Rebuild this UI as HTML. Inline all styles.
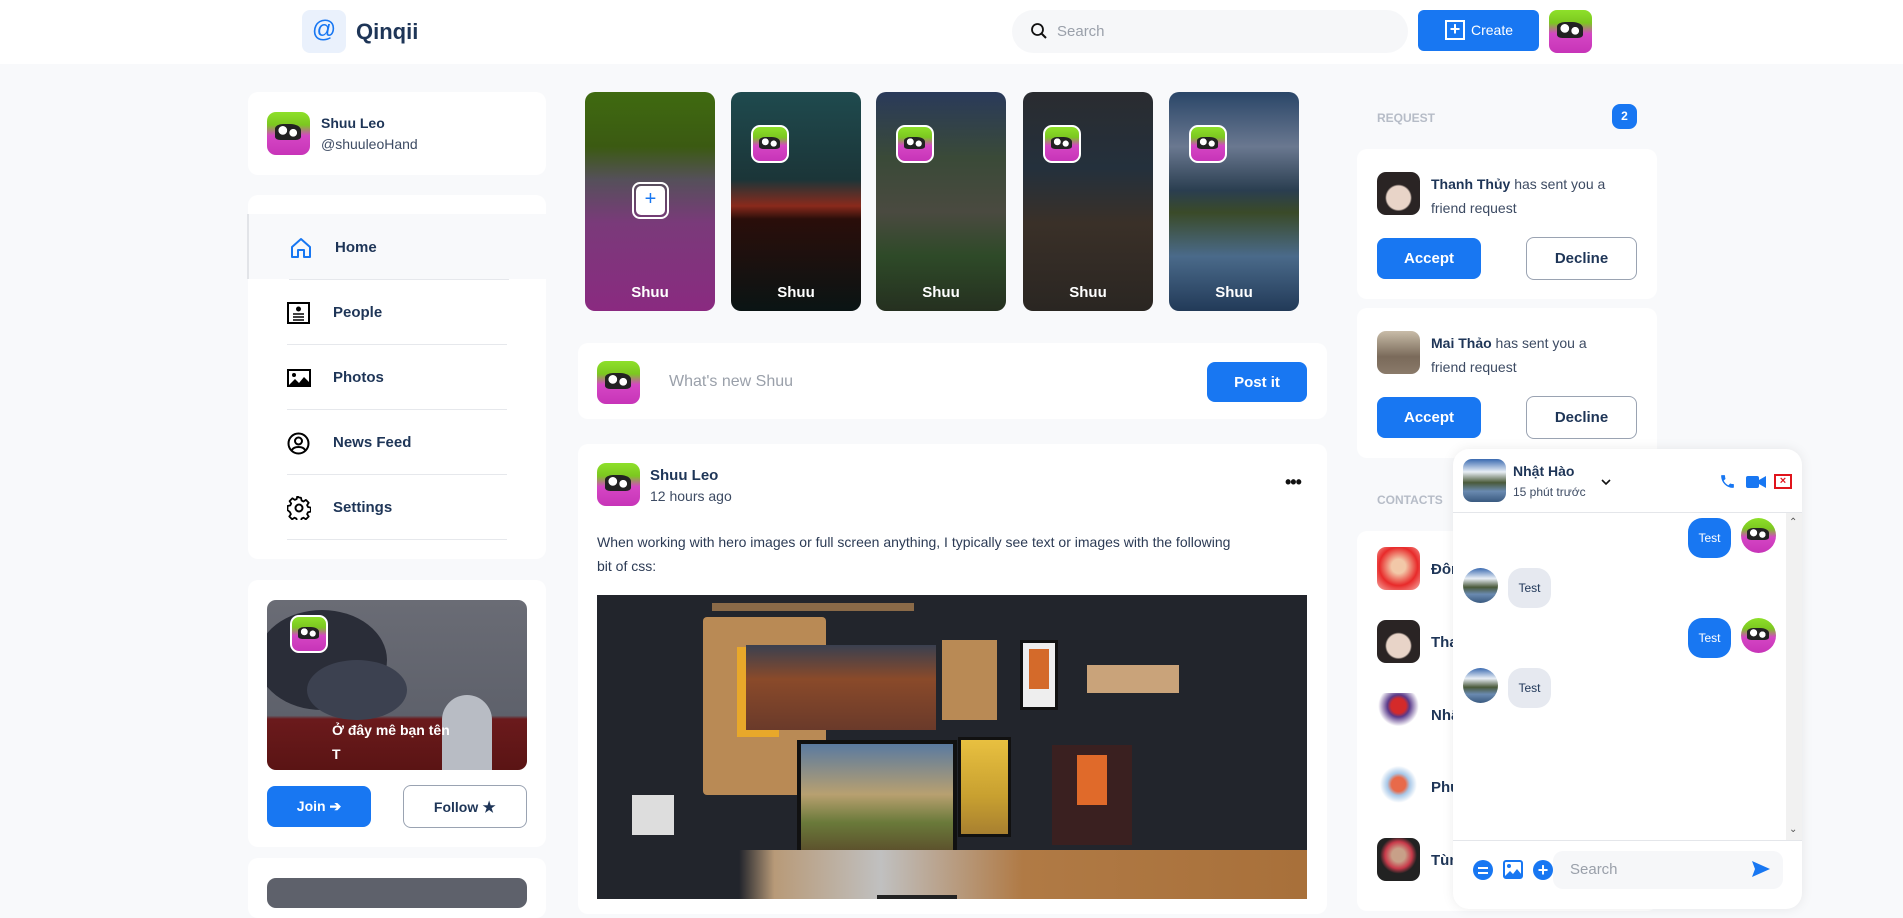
<!DOCTYPE html>
<html><head><meta charset="utf-8"><style>
*{box-sizing:border-box;margin:0;padding:0}
body{width:1903px;height:899px;overflow:hidden;background:#f8f9fb;font-family:"Liberation Sans","Noto Sans CJK SC",sans-serif;color:#1e3557;position:relative}
.a{position:absolute}
.card{position:absolute;background:#fff;border-radius:10px}
.cow{background:linear-gradient(180deg,#8ee02a 0%,#7cc820 30%,#d546c4 55%,#c734b8 100%);overflow:hidden}
.cow:after{content:"";position:absolute;left:18%;top:28%;width:62%;height:36%;background:radial-gradient(circle at 30% 40%,#fff 0 20%,transparent 22%),radial-gradient(circle at 70% 55%,#fff 0 18%,transparent 20%),#222;border-radius:30% 40% 20% 20%}
.b{font-weight:bold}
.nav{position:absolute;left:333px;font-weight:bold;font-size:15px;color:#1e3557}
.sep{position:absolute;left:287px;width:220px;height:1px;background:#e6e8ec}
.btnb{position:absolute;background:#1877f2;color:#fff;border-radius:8px;font-weight:bold;font-size:15px;display:flex;align-items:center;justify-content:center}
.btnw{position:absolute;background:#fff;border:1px solid #9aa3b2;color:#1e3557;border-radius:8px;font-weight:bold;font-size:15px;display:flex;align-items:center;justify-content:center}
.story{position:absolute;top:92px;width:130px;height:219px;border-radius:10px;overflow:hidden}
.story .n{position:absolute;bottom:10px;width:100%;text-align:center;color:#fff;font-weight:bold;font-size:15px}
.story .av{position:absolute;left:20px;top:33px;width:38px;height:38px;border-radius:9px;border:2px solid #fff}
.ct{position:absolute;left:1377px;width:43px;height:43px;border-radius:9px}
.cn{position:absolute;left:1431px;font-weight:bold;font-size:15px}
.bub{position:absolute;height:40px;border-radius:14px;font-size:12px;display:flex;align-items:center;justify-content:center;width:43px}
</style></head><body>
<!-- header -->
<div class="a" style="left:0;top:0;width:1903px;height:64px;background:#fff"></div>
<div class="a" style="left:302px;top:10px;width:44px;height:43px;background:#eaf1fc;border-radius:8px;color:#1877f2;font-size:24px;text-align:center;line-height:40px">@</div>
<div class="a b" style="left:356px;top:19px;font-size:22px;color:#1e3557">Qinqii</div>
<div class="a" style="left:1012px;top:10px;width:396px;height:43px;background:#f6f7f9;border-radius:22px"></div>
<svg class="a" style="left:1030px;top:22px" width="18" height="18" viewBox="0 0 18 18"><circle cx="7.5" cy="7.5" r="5.5" fill="none" stroke="#111" stroke-width="1.8"/><path d="M11.5 11.5L16 16" stroke="#111" stroke-width="2"/></svg>
<div class="a" style="left:1057px;top:23px;font-size:15px;color:#9aa0aa">Search</div>
<div class="a" style="left:1418px;top:10px;width:121px;height:41px;background:#1877f2;border-radius:6px"></div>
<div class="a" style="left:1445px;top:20px;width:20px;height:20px;border:2px solid #fff;color:#fff;font-size:18px;line-height:15px;text-align:center;font-weight:bold">+</div>
<div class="a" style="left:1471px;top:22px;color:#fff;font-size:14px">Create</div>
<div class="a cow" style="left:1549px;top:10px;width:43px;height:43px;border-radius:8px"></div>

<!-- left -->
<div class="card" style="left:248px;top:92px;width:298px;height:83px"></div>
<div class="a cow" style="left:267px;top:112px;width:43px;height:43px;border-radius:9px"></div>
<div class="a b" style="left:321px;top:115px;font-size:14px">Shuu Leo</div>
<div class="a" style="left:321px;top:136px;font-size:14px;color:#3d4b63">@shuuleoHand</div>

<div class="card" style="left:248px;top:195px;width:298px;height:364px"></div>
<div class="a" style="left:247px;top:214px;width:299px;height:65px;background:#f8f9fb;border-left:2px solid #e2e4e8"></div>
<svg class="a" style="left:290px;top:237px" width="22" height="22" viewBox="0 0 22 22"><path d="M2 10L11 2l9 8v10h-6v-7H8v7H2z" fill="none" stroke="#1877f2" stroke-width="2" stroke-linejoin="round"/></svg>
<div class="nav" style="top:239px;left:335px">Home</div>
<div class="sep" style="top:279px;left:289px"></div>
<svg class="a" style="left:287px;top:302px" width="23" height="22" viewBox="0 0 23 22"><rect x="1" y="1" width="21" height="20" fill="none" stroke="#000" stroke-width="2"/><circle cx="11.5" cy="7" r="2.5"/><path d="M6 12h11M6 15h11M6 18h11" stroke="#000" stroke-width="1.6"/></svg>
<div class="nav" style="top:304px">People</div>
<div class="sep" style="top:344px"></div>
<svg class="a" style="left:287px;top:369px" width="24" height="18" viewBox="0 0 24 18"><rect x="1" y="1" width="22" height="16" fill="none" stroke="#000" stroke-width="2"/><circle cx="7" cy="6" r="2"/><path d="M1 17L8 10l4 4 5-6 6 6v3z"/></svg>
<div class="nav" style="top:369px">Photos</div>
<div class="sep" style="top:409px"></div>
<svg class="a" style="left:287px;top:432px" width="23" height="23" viewBox="0 0 23 23"><circle cx="11.5" cy="11.5" r="10" fill="none" stroke="#000" stroke-width="2"/><circle cx="11.5" cy="9" r="3.5" fill="none" stroke="#000" stroke-width="2"/><path d="M5 18c2-4 11-4 13 0" fill="none" stroke="#000" stroke-width="2"/></svg>
<div class="nav" style="top:434px">News Feed</div>
<div class="sep" style="top:474px"></div>
<svg class="a" style="left:287px;top:496px" width="24" height="24" viewBox="0 0 24 24"><path d="M12 1.5l2 .3.6 2.8 1.9.9 2.4-1.6 2.8 2.8-1.6 2.4.9 1.9 2.8.6v4l-2.8.6-.9 1.9 1.6 2.4-2.8 2.8-2.4-1.6-1.9.9-.6 2.8h-4l-.6-2.8-1.9-.9-2.4 1.6-2.8-2.8 1.6-2.4-.9-1.9L.5 14v-4l2.8-.6.9-1.9L2.6 5.1 5.4 2.3l2.4 1.6 1.9-.9.6-2.8z" fill="none" stroke="#000" stroke-width="1.8" stroke-linejoin="round"/><circle cx="12" cy="12" r="3.5" fill="none" stroke="#000" stroke-width="2"/></svg>
<div class="nav" style="top:499px">Settings</div>
<div class="sep" style="top:539px"></div>

<div class="card" style="left:248px;top:580px;width:298px;height:267px"></div>
<div class="a" style="left:267px;top:600px;width:260px;height:170px;border-radius:9px;overflow:hidden;background:linear-gradient(180deg,#6a6c75 0%,#5e616b 68%,#6b1a1c 70%,#5a1414 100%)">
<div class="a" style="left:-10px;top:10px;width:130px;height:100px;border-radius:50%;background:#2a2d38"></div>
<div class="a" style="left:40px;top:60px;width:100px;height:60px;border-radius:50%;background:#3c4150"></div>
<div class="a" style="left:175px;top:95px;width:50px;height:80px;border-radius:25px 25px 0 0;background:#b8bcc4"></div>
</div>
<div class="a cow" style="left:290px;top:615px;width:38px;height:38px;border-radius:9px;border:2px solid #fff"></div>
<div class="a b" style="left:332px;top:718px;color:#fff;font-size:14px;line-height:24px">Ở đây mê bạn tên<br>T</div>
<div class="btnb" style="left:267px;top:786px;width:104px;height:41px;font-size:14px">Join ➔</div>
<div class="btnw" style="left:403px;top:785px;width:124px;height:43px;font-size:14px">Follow ★</div>
<div class="card" style="left:248px;top:858px;width:298px;height:60px"></div>
<div class="a" style="left:267px;top:878px;width:260px;height:30px;border-radius:9px;background:#5e616b"></div>

<!-- stories -->
<div class="story" style="left:585px;background:linear-gradient(180deg,#3f6a10 0%,#3b5a12 25%,#55505a 40%,#7a3a7a 60%,#8a2a80 100%)">
<div class="a" style="left:47px;top:90px;width:37px;height:37px;border:2px solid #fff;border-radius:8px;padding:2px"><div style="width:100%;height:100%;background:#fff;border-radius:5px;color:#1877f2;text-align:center;font-size:20px;line-height:27px">+</div></div>
<div class="n">Shuu</div></div>
<div class="story" style="left:731px;background:linear-gradient(180deg,#1f4a4e 0%,#1b3538 40%,#8a2a1c 52%,#2a0e0a 58%,#0a1414 100%)"><div class="av cow"></div><div class="n">Shuu</div></div>
<div class="story" style="left:876px;background:linear-gradient(180deg,#2a3a5a 0%,#3a4a38 30%,#4a4a40 55%,#2e4a28 75%,#253020 100%)"><div class="av cow"></div><div class="n">Shuu</div></div>
<div class="story" style="left:1023px;background:linear-gradient(180deg,#2a2c30 0%,#24303c 35%,#3a3028 60%,#2a2622 100%)"><div class="av cow"></div><div class="n">Shuu</div></div>
<div class="story" style="left:1169px;background:linear-gradient(180deg,#2a4668 0%,#6a7890 25%,#2a3e50 45%,#3a4a28 55%,#4a6a8a 75%,#223a58 100%)"><div class="av cow"></div><div class="n">Shuu</div></div>

<!-- post box -->
<div class="card" style="left:578px;top:343px;width:749px;height:76px"></div>
<div class="a cow" style="left:597px;top:361px;width:43px;height:43px;border-radius:9px"></div>
<div class="a" style="left:669px;top:373px;font-size:16px;color:#9aa0aa">What's new Shuu</div>
<div class="btnb" style="left:1207px;top:362px;width:100px;height:40px">Post it</div>

<!-- post -->
<div class="card" style="left:578px;top:444px;width:749px;height:470px"></div>
<div class="a cow" style="left:597px;top:463px;width:43px;height:43px;border-radius:9px"></div>
<div class="a b" style="left:650px;top:467px;font-size:15px">Shuu Leo</div>
<div class="a" style="left:650px;top:488px;font-size:14px;color:#3d4b63">12 hours ago</div>
<div class="a b" style="left:1285px;top:472px;font-size:18px;color:#111;letter-spacing:-1px">•••</div>
<div class="a" style="left:597px;top:530px;font-size:14px;line-height:24px;color:#2c3b55">When working with hero images or full screen anything, I typically see text or images with the following<br>bit of css:</div>
<div class="a" style="left:597px;top:595px;width:710px;height:304px;overflow:hidden;background:#22252c">
<div class="a" style="left:106px;top:22px;width:123px;height:178px;background:#b98a55;border-radius:4px"></div>
<div class="a" style="left:140px;top:52px;width:42px;height:90px;background:#e8a82a"></div>
<div class="a" style="left:115px;top:8px;width:202px;height:8px;background:#8a6a48"></div>
<div class="a" style="left:149px;top:50px;width:190px;height:85px;background:linear-gradient(180deg,#3a4050,#8a4a2a 40%,#6a3a2a)"></div>
<div class="a" style="left:345px;top:45px;width:55px;height:80px;background:#b98a55"></div>
<div class="a" style="left:423px;top:45px;width:38px;height:70px;background:#eee;border:3px solid #111"><div style="margin:6px;height:40px;background:#d46a2a"></div></div>
<div class="a" style="left:490px;top:70px;width:92px;height:28px;background:#c9a37a"></div>
<div class="a" style="left:200px;top:145px;width:160px;height:120px;background:linear-gradient(180deg,#5a7aa0,#b8a070 45%,#6a7a3a 70%,#5a4a2a);border:4px solid #111"></div>
<div class="a" style="left:361px;top:142px;width:53px;height:100px;background:linear-gradient(180deg,#e8c040,#c8a030 60%,#a88030);border:3px solid #111"></div>
<div class="a" style="left:455px;top:150px;width:80px;height:100px;background:#3a2020"><div style="margin:10px 25px;height:50px;background:#e06a2a"></div></div>
<div class="a" style="left:0;top:255px;width:710px;height:60px;background:linear-gradient(90deg,#22252c 20%,#b89a78 25%,#c0c0c0 40%,#b07a45 60%,#a8703a)"></div>
<div class="a" style="left:35px;top:200px;width:42px;height:40px;background:#ddd"></div>
<div class="a" style="left:280px;top:300px;width:80px;height:20px;background:#222"></div>
</div>

<!-- right -->
<div class="a b" style="left:1377px;top:111px;font-size:12px;color:#b6bcc7">REQUEST</div>
<div class="a" style="left:1612px;top:104px;width:25px;height:25px;border-radius:8px;background:#1877f2;color:#fff;font-size:12px;font-weight:bold;text-align:center;line-height:25px">2</div>
<div class="card" style="left:1357px;top:149px;width:300px;height:150px"></div>
<div class="a" style="left:1377px;top:172px;width:43px;height:43px;border-radius:9px;background:radial-gradient(circle at 50% 60%,#e8d4c8 0 35%,#2a2424 40%)"></div>
<div class="a" style="left:1431px;top:172px;font-size:14px;line-height:24px;color:#3d4b63"><b style="color:#1e3557">Thanh Thủy</b> has sent you a<br>friend request</div>
<div class="btnb" style="left:1377px;top:238px;width:104px;height:41px">Accept</div>
<div class="btnw" style="left:1526px;top:237px;width:111px;height:43px">Decline</div>
<div class="card" style="left:1357px;top:308px;width:300px;height:150px"></div>
<div class="a" style="left:1377px;top:331px;width:43px;height:43px;border-radius:9px;background:linear-gradient(180deg,#c8bca8,#7a6a5a 60%,#8a7a6a)"></div>
<div class="a" style="left:1431px;top:331px;font-size:14px;line-height:24px;color:#3d4b63"><b style="color:#1e3557">Mai Thảo</b> has sent you a<br>friend request</div>
<div class="btnb" style="left:1377px;top:397px;width:104px;height:41px">Accept</div>
<div class="btnw" style="left:1526px;top:396px;width:111px;height:43px">Decline</div>
<div class="a b" style="left:1377px;top:493px;font-size:12px;color:#b6bcc7">CONTACTS</div>
<div class="card" style="left:1357px;top:531px;width:300px;height:380px"></div>
<div class="ct" style="top:547px;background:radial-gradient(circle at 50% 45%,#f2c8a8 0 22%,#e82a2a 60%,#f5b0a8)"></div><div class="cn" style="top:561px">Đông</div>
<div class="ct" style="top:620px;background:radial-gradient(circle at 50% 60%,#e8d4c8 0 35%,#2a2424 40%)"></div><div class="cn" style="top:634px">Thanh</div>
<div class="ct" style="top:693px;background:radial-gradient(circle at 50% 30%,#d42a2a 0 20%,#5a3a8a 30%,#fff 55%)"></div><div class="cn" style="top:707px">Nhật</div>
<div class="ct" style="top:765px;background:radial-gradient(circle at 50% 45%,#e86a4a 0 22%,#a8c8e8 35%,#fff 58%)"></div><div class="cn" style="top:779px">Phú</div>
<div class="ct" style="top:838px;background:radial-gradient(circle at 50% 40%,#c8a088 0 20%,#c83a4a 40%,#222 55%)"></div><div class="cn" style="top:852px">Tùng</div>

<!-- chat -->
<div class="a" style="left:1453px;top:449px;width:349px;height:460px;background:#fff;border-radius:16px;box-shadow:0 0 12px rgba(0,0,0,.08);overflow:hidden">
<div class="a" style="left:10px;top:10px;width:43px;height:43px;border-radius:9px;background:linear-gradient(180deg,#3a6ab0,#e8eef5 30%,#4a5a3a 55%,#6a8ab0 75%,#3a5a80)"></div>
<div class="a b" style="left:60px;top:14px;font-size:14px">Nhật Hào</div>
<div class="a" style="left:60px;top:36px;font-size:12px;color:#3d4b63">15 phút trước</div>
<svg class="a" style="left:148px;top:30px" width="10" height="7" viewBox="0 0 10 7"><path d="M1 1l4 4 4-4" fill="none" stroke="#111" stroke-width="1.6"/></svg>
<svg class="a" style="left:266px;top:24px" width="17" height="17" viewBox="0 0 24 24"><path d="M6.6 10.8a15 15 0 006.6 6.6l2.2-2.2c.3-.3.7-.4 1-.2 1.1.4 2.3.6 3.6.6.6 0 1 .4 1 1V20c0 .6-.4 1-1 1A17 17 0 013 4c0-.6.4-1 1-1h3.5c.6 0 1 .4 1 1 0 1.3.2 2.5.6 3.6.1.3 0 .7-.2 1z" fill="#1877f2"/></svg>
<svg class="a" style="left:293px;top:26px" width="20" height="14" viewBox="0 0 20 14"><rect x="0" y="1" width="13" height="12" rx="2" fill="#1877f2"/><path d="M13 5l7-4v12l-7-4z" fill="#1877f2"/></svg>
<div class="a" style="left:321px;top:25px;width:18px;height:15px;border:2px solid #e0141c;color:#e0141c;font-size:11px;font-weight:bold;text-align:center;line-height:11px">×</div>
<div class="a" style="left:0;top:63px;width:349px;height:1px;background:#e4e6ea"></div>
<div class="a" style="left:333px;top:64px;width:16px;height:327px;background:#f1f1f1"></div>
<div class="a" style="left:336px;top:68px;font-size:10px;color:#555">⌃</div>
<div class="a" style="left:336px;top:375px;font-size:10px;color:#555">⌄</div>
<div class="bub" style="left:235px;top:69px;background:#1877f2;color:#fff">Test</div>
<div class="a cow" style="left:288px;top:69px;width:35px;height:35px;border-radius:50%"></div>
<div class="a" style="left:10px;top:119px;width:35px;height:35px;border-radius:50%;background:linear-gradient(180deg,#3a6ab0,#e8eef5 30%,#4a5a3a 55%,#6a8ab0 75%,#3a5a80)"></div>
<div class="bub" style="left:55px;top:119px;background:#e6e9f0">Test</div>
<div class="bub" style="left:235px;top:169px;background:#1877f2;color:#fff">Test</div>
<div class="a cow" style="left:288px;top:169px;width:35px;height:35px;border-radius:50%"></div>
<div class="a" style="left:10px;top:219px;width:35px;height:35px;border-radius:50%;background:linear-gradient(180deg,#3a6ab0,#e8eef5 30%,#4a5a3a 55%,#6a8ab0 75%,#3a5a80)"></div>
<div class="bub" style="left:55px;top:219px;background:#e6e9f0">Test</div>
<div class="a" style="left:0;top:391px;width:349px;height:1px;background:#e4e6ea"></div>
<div class="a" style="left:20px;top:411px;width:20px;height:20px;border-radius:50%;background:#1877f2"><div style="margin:7px 5px 0;height:2px;background:#fff"></div><div style="margin:3px 5px 0;height:2px;background:#fff"></div></div>
<svg class="a" style="left:50px;top:411px" width="20" height="19" viewBox="0 0 20 19"><rect x="1" y="1" width="18" height="17" rx="2" fill="none" stroke="#1877f2" stroke-width="2"/><circle cx="6" cy="6" r="2" fill="#1877f2"/><path d="M1 17l6-6 3 3 4-5 5 6v2z" fill="#1877f2"/></svg>
<div class="a" style="left:80px;top:411px;width:20px;height:20px;border-radius:50%;background:#1877f2;color:#fff;text-align:center;font-size:18px;line-height:20px;font-weight:bold">+</div>
<div class="a" style="left:100px;top:402px;width:230px;height:38px;background:#f6f7f9;border-radius:10px"></div>
<div class="a" style="left:117px;top:412px;font-size:15px;color:#9aa0aa">Search</div>
<svg class="a" style="left:299px;top:412px" width="18" height="16" viewBox="0 0 18 16"><path d="M0 0l18 8-18 8 3-8z" fill="#1877f2"/></svg>
</div>
</body></html>
